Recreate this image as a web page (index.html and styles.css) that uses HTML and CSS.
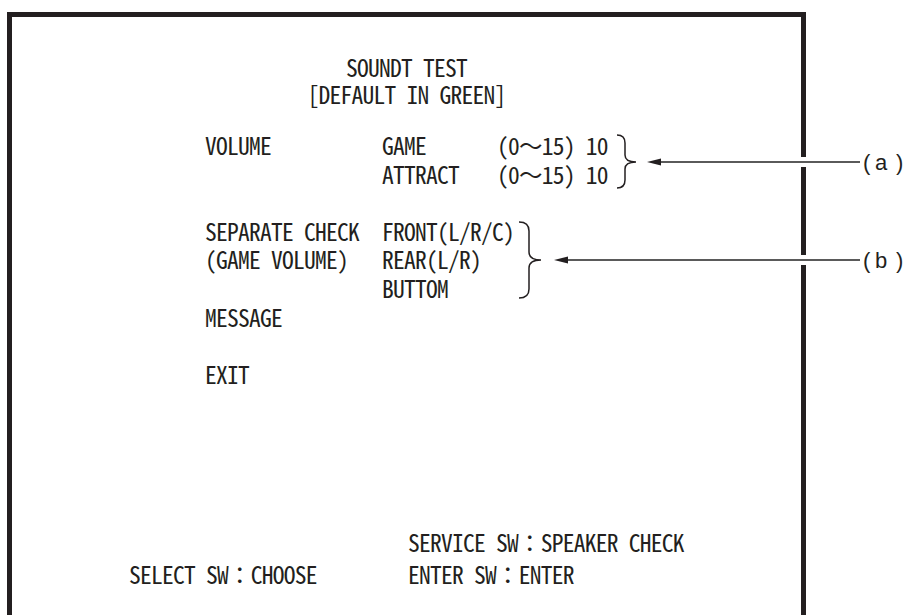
FILE: index.html
```html
<!DOCTYPE html>
<html lang="en">
<head>
<meta charset="utf-8">
<title>SOUNDT TEST</title>
<link rel="stylesheet" href="styles.css">
</head>
<body>
<div class="frame">
  <div class="title">
    <div class="t">SOUNDT TEST</div>
    <div class="t">[DEFAULT IN GREEN]</div>
  </div>
  <div class="menu">
    <div class="group">
      <div class="row"><span class="t">VOLUME</span><span class="t">GAME</span><span class="t">(0〜15) 10</span></div>
      <div class="row"><span class="t"></span><span class="t">ATTRACT</span><span class="t">(0〜15) 10</span></div>
    </div>
    <div class="group gap">
      <div class="row"><span class="t">SEPARATE CHECK</span><span class="t">FRONT(L/R/C)</span></div>
      <div class="row"><span class="t">(GAME VOLUME)</span><span class="t">REAR(L/R)</span></div>
      <div class="row"><span class="t"></span><span class="t">BUTTOM</span></div>
      <div class="row"><span class="t">MESSAGE</span></div>
    </div>
    <div class="group gap">
      <div class="row"><span class="t">EXIT</span></div>
    </div>
  </div>
  <div class="footer">
    <span class="t"></span><span class="t">SERVICE SW：SPEAKER CHECK</span>
    <span class="t">SELECT SW：CHOOSE</span><span class="t">ENTER SW：ENTER</span>
  </div>
</div>
<svg class="callouts" width="909" height="615" viewBox="0 0 909 615">
  <rect class="gap-mask" x="799" y="157" width="10" height="10"/>
  <rect class="gap-mask" x="799" y="255" width="10" height="10"/>
  <path class="brace" d="M617 135 Q625 135 625 143 L625 155 Q625 162 636 162 Q625 162 625 169 L625 180 Q625 188 617 188"/>
  <path class="brace" d="M519 222 Q529 222 529 231 L529 252 Q529 260 541 260 Q529 260 529 268 L529 289 Q529 298 519 298"/>
  <line class="lead" x1="658" y1="162" x2="860" y2="162"/>
  <polygon class="head" points="647,162 661,158.5 661,165.5"/>
  <line class="lead" x1="566" y1="260" x2="860" y2="260"/>
  <polygon class="head" points="554,260 568,256.5 568,263.5"/>
  <text class="label" x="863 875 896" y="170">(a)</text>
  <text class="label" x="863 875 896" y="268">(b)</text>
</svg>
</body>
</html>
```
FILE: styles.css
```css
html, body {
  margin: 0;
  padding: 0;
  background: #ffffff;
}
body {
  width: 909px;
  height: 615px;
  overflow: hidden;
  position: relative;
  color: #231f20;
  font-family: "Noto Sans Mono CJK JP", "Noto Sans Mono CJK SC", "DejaVu Sans Mono", monospace;
  font-size: 23.5px;
  letter-spacing: -0.75px;
}
.t {
  white-space: pre;
}
.frame {
  margin: 12px 0 0 7px;
  width: 789px;
  height: 620px;
  border: 5px solid #231f20;
  border-bottom: none;
  display: flex;
  flex-direction: column;
}
.title {
  padding-top: 37px;
  line-height: 27px;
  text-align: center;
}
.menu {
  margin-top: 23px;
  padding-left: 193px;
  line-height: 28.6px;
  display: flex;
  flex-direction: column;
}
.group.gap {
  margin-top: 28.6px;
}
.row {
  display: grid;
  grid-template-columns: 177px 115px auto;
  height: 28.6px;
}
.footer {
  margin-top: 138px;
  padding-left: 117px;
  display: grid;
  grid-template-columns: 279px auto;
  line-height: 32px;
}
.callouts {
  position: absolute;
  left: 0;
  top: 0;
  pointer-events: none;
}
.gap-mask {
  fill: #ffffff;
}
.brace {
  fill: none;
  stroke: #231f20;
  stroke-width: 1.5;
}
.lead {
  stroke: #5a5a5a;
  stroke-width: 1.8;
}
.head {
  fill: #231f20;
}
.label {
  font-family: "Liberation Sans", Arial, sans-serif;
  font-size: 22px;
  letter-spacing: 0;
  fill: #231f20;
}
```
